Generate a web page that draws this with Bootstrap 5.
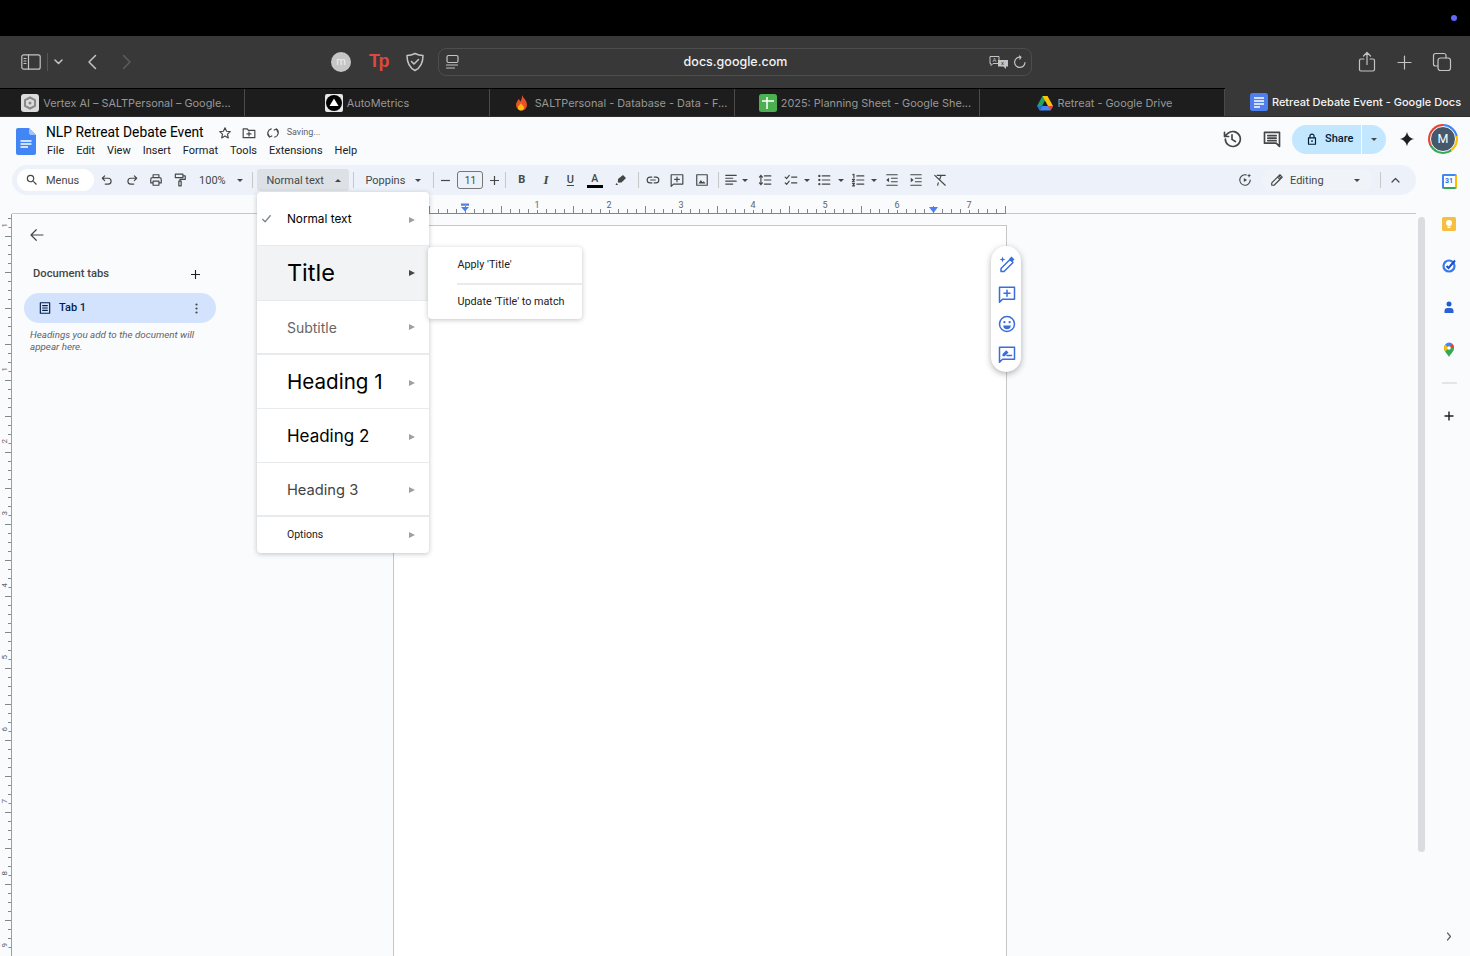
<!DOCTYPE html>
<html lang="en">
<head>
  <meta charset="UTF-8" />
  <meta name="viewport" content="width=device-width, initial-scale=1.0"/>
  <title>Retreat Debate Event - Google Docs</title>
  <link href="https://cdn.jsdelivr.net/npm/bootstrap@5.3.0/dist/css/bootstrap.min.css" rel="stylesheet" />
  <style>
    html, body { height: 100%; overflow: hidden; }
    body { font-family: Roboto, "Liberation Sans", sans-serif; background: #f9fbfd; color: #444746; font-size: 11px; }
    svg { display: block; flex-shrink: 0; }
    .stroke-ico { fill: none; stroke: currentColor; stroke-width: 2; stroke-linecap: round; stroke-linejoin: round; }
    .sw-1 { stroke-width: 1.2; }
    .sw-2 { stroke-width: 1.5; }
    .sw-3 { stroke-width: 1.6; }
    .ico { width: 14px; height: 14px; }
    .ico-md { width: 18px; height: 18px; }
    .ico-lg { width: 20px; height: 20px; }
    .fill-row { min-height: 0; }

    /* mac chrome */
    .top-black { height: 36px; background: #000; padding-right: 13px; }
    .rec-dot { width: 6px; height: 6px; border-radius: 50%; background: #6464ff; }
    .safari-bar { height: 52px; background: #383838; color: #c4c4c4; flex-shrink: 0; }
    .sb-left { width: 438px; padding-left: 21px; }
    .sb-sep { width: 1px; height: 18px; background: #555; margin: 0 6px; }
    .sb-back { margin-left: 24px; }
    .sb-forward { margin-left: 25px; color: #5c5c5c; }
    .sb-avatar { width: 20px; height: 20px; border-radius: 50%; background: #c6c6c6; color: #eee; font-size: 11px; margin-left: 199px; }
    .sb-tp { font-family: "Liberation Sans", sans-serif; font-weight: 700; font-size: 18px; color: #dc4a3f; width: 19px; margin: 0 0 2px 18px; letter-spacing: -1.5px; line-height: 1; }
    .sb-shield { margin-left: 17px; }
    .addr-box { width: 594px; height: 28px; border: 1px solid #4d4d4d; border-radius: 8px; display: grid; grid-template-columns: 1fr auto 1fr; align-items: center; padding: 0 4px 0 5px; }
    .addr-text { font-family: Inter, sans-serif; font-size: 12.5px; color: #f2f2f2; font-weight: 500; padding-top: 1px; }
    .sb-right { gap: 18.5px; padding-right: 18px; }
    .tab-strip { height: 29px; flex-shrink: 0; background: #1d1d1d; border-top: 1px solid #000; border-bottom: 1px solid #2d2d2d; font-family: Inter, sans-serif; font-size: 10.9px; color: #979797; }
    .win-tab { width: 245px; border-right: 1px solid #4a4a4a; gap: 4px; white-space: nowrap; }
    .win-tab span { padding-top: 1px; }
    .win-tab.is-current { background: #383838; color: #f4f4f4; border-right: 0; font-weight: 500; font-size: 11px; margin-top: -1px; }
    .fav { width: 18px; height: 18px; }

    /* docs header */
    .doc-head { height: 48px; padding-left: 16px; flex-shrink: 0; }
    .doc-logo { width: 20px; height: 27px; margin-right: 10px; }
    .doc-name { font-size: 13.8px; color: #000; line-height: 18px; padding-top: 6px; }
    .head-ico { color: #444746; width: 14px; height: 14px; }
    .saving-note { font-size: 9px; color: #5f6368; margin-left: -3px; }
    .name-icons { gap: 10px; margin-left: 14px; }
    .menu-links { gap: 12px; font-size: 11px; color: #202124; line-height: 16px; padding: 2px 0 0 1px; }
    .head-right { padding: 0 12px 4px 0; }
    .history-ico { margin-right: 20px; }
    .share-group { width: 94px; height: 29px; margin-left: 10px; background: #c2e7ff; border-radius: 15px; color: #001d35; }
    .share-main { width: 69px; font-weight: 500; font-size: 11px; gap: 6px; padding-left: 13px; }
    .share-caret { width: 25px; border-left: 1px solid #f9fbfd; height: 29px; }
    .gem { margin-left: 13px; color: #1f1f1f; }
    .avatar-ring { width: 30px; height: 30px; margin-left: 13px; border-radius: 50%; background: conic-gradient(#4285f4 0 22%, #fbbc04 22% 40%, #34a853 40% 68%, #ea4335 68% 100%); }
    .avatar-in { width: 26px; height: 26px; border: 1px solid #fff; border-radius: 50%; background: #46586a; color: #fff; font-size: 12.5px; }

    /* toolbar */
    .editor-col { width: 1416px; flex-shrink: 0; padding-left: 12px; }
    .tool-strip { height: 30px; background: #edf2fa; border-radius: 15px; padding-left: 5px; flex-shrink: 0; }
    .tool-strip .tb-txt { padding-top: 2px; }
    .menus-pill { width: 77px; height: 22px; background: #fff; border-radius: 11px; padding-left: 8px; gap: 7px; margin-right: 1px; }
    .tb-cell { height: 22px; display: flex; align-items: center; justify-content: center; flex-shrink: 0; color: #444746; }
    .cw-10 { width: 10px; } .cw-12 { width: 12px; } .cw-14 { width: 14px; } .cw-16 { width: 16px; } .cw-18 { width: 18px; } .cw-21 { width: 21px; }
    .cw-22 { width: 22px; } .cw-24 { width: 24.4px; } .cw-27 { width: 27px; } .cw-30 { width: 30px; }
    .tb-sep { width: 1px; height: 16px; background: #c7c7c7; margin: 0 3.5px; flex-shrink: 0; }
    .caret-dn { width: 0; height: 0; border-left: 3.5px solid transparent; border-right: 3.5px solid transparent; border-top: 3.5px solid #444746; }
    .caret-up { width: 0; height: 0; border-left: 3.5px solid transparent; border-right: 3.5px solid transparent; border-bottom: 3.5px solid #444746; }
    .zoom-cell { width: 56.4px; padding-left: 6.5px; justify-content: space-between; padding-right: 5.5px; }
    .style-anchor { width: 92px; height: 22px; margin-left: .5px; background: #dde1e6; border-radius: 3px; padding: 0 8px 0 9px; }
    .font-cell { width: 72px; padding: 0 8px; justify-content: space-between; }
    .size-box { width: 26px; height: 18px; margin: 0 4px; border: 1px solid #747775; border-radius: 3px; font-size: 10px; }
    .fmt-b { font-weight: 700; font-size: 11px; }
    .fmt-i { font-family: "Liberation Serif", serif; font-style: italic; font-weight: 700; font-size: 13px; }
    .fmt-u { font-weight: 500; font-size: 11px; text-decoration: underline; text-underline-offset: 1.5px; }
    .fmt-a { font-weight: 500; font-size: 10.5px; line-height: 11px; flex-direction: column; }
    .a-bar { width: 16px; height: 3px; background: #000; margin-top: 1px; }
    .edit-pill { width: 110px; height: 22px; margin-left: 10px; border-radius: 11px; background: #f0f4f9; padding: 0 12px 0 8px; gap: 6px; }
    .right-sep { margin: 0 7px 0 8px; }
    .fold-cell { margin-right: 14px; }

    /* dropdown */
    .style-menu { top: 23px; left: 0; width: 172px; min-width: 172px; padding: 0; border: 0; border-radius: 4px; box-shadow: 0 1px 5px rgba(60,64,67,.3); z-index: 30; }
    .style-item { display: flex; align-items: center; justify-content: space-between; padding: 0 14px 0 30px; border-bottom: 1px solid #e8eaed; font-family: Inter, sans-serif; color: #000; }
    .style-item:hover { background: transparent; }
    .style-item .tri { width: 0; height: 0; border-top: 3.5px solid transparent; border-bottom: 3.5px solid transparent; border-left: 6px solid #9aa0a6; }
    .it-normal { height: 54px; font-size: 11.8px; position: relative; padding-top: 3px; }
    .it-title { height: 55px; font-size: 23.5px; background: #f1f3f4; }
    .it-title:hover { background: #f1f3f4; }
    .it-title .tri { border-left-color: #444746; }
    .it-sub { height: 54px; font-size: 14px; color: #666; border-bottom-width: 2px; }
    .it-h1 { height: 54px; font-size: 20.6px; padding-top: 2px; }
    .it-h2 { height: 54px; font-size: 17px; padding-top: 2px; }
    .it-h3 { height: 54px; font-size: 14.7px; color: #434343; border-bottom-width: 2px; padding-top: 2px; }
    .it-opt { height: 36px; font-family: Roboto, sans-serif; font-size: 10.5px; color: #202124; border-bottom: 0; }
    .check-mark { left: 4px; top: 21px; color: #80868b; }
    .sub-menu { left: 171px; top: 55px; width: 154px; height: 72px; background: #fff; border-radius: 4px; box-shadow: 0 1px 5px rgba(60,64,67,.3); font-size: 10.8px; color: #202124; z-index: 31; padding: 1px 0 0 29.5px; }
    .sub-row { height: 35px; }
    .sub-row + .sub-row { border-top: 2px solid #e8eaed; height: 36px; }

    /* rulers */
    .ruler-row { height: 19px; margin-bottom: -1px; padding-left: 381px; position: relative; z-index: 2; flex-shrink: 0; }
    .h-ruler { width: 613px; height: 19px; position: relative; border-bottom: 1px solid #80868b; padding-left: 108px; font-size: 9px; color: #5f6368;
      background-image: repeating-linear-gradient(90deg, #80868b 0 1px, transparent 1px 36px), repeating-linear-gradient(90deg, #80868b 0 1px, transparent 1px 9px);
      background-size: 100% 7px, 100% 4px; background-position: 0 100%, 0 100%; background-repeat: no-repeat; }
    .h-cell { width: 72px; text-align: center; line-height: 18px; height: 18px; }
    .h-cell span { background: #f9fbfd; padding: 0 2px; display: inline-block; height: 15px; line-height: 20px; }
    .indent-left { left: 68px; top: 8px; width: 8px; }
    .indent-right { left: 536px; top: 12px; }
    .work-row { border-top: 1px solid #c7c7c7; min-height: 0; }
    .v-ruler { width: 12px; margin-left: -12px; flex-shrink: 0; overflow: hidden; font-size: 8px; color: #5f6368; border-right: 1px solid #9aa0a6; position: relative;
      background-image: repeating-linear-gradient(0deg, transparent 0 35px, #80868b 35px 36px), repeating-linear-gradient(0deg, transparent 0 8px, #80868b 8px 9px);
      background-size: 6px 100%, 3px 100%; background-position: 100% 0, 100% 0; background-repeat: no-repeat; }
    .v-num { height: 72px; flex-shrink: 0; display: flex; align-items: center; padding-left: 1px; }
    .v-num span { writing-mode: vertical-rl; transform: rotate(180deg); background: #f9fbfd; line-height: 8px; }
    .v-first { height: 22px; }
    .v-gap { height: 97px; flex-shrink: 0; }

    /* sidebar */
    .outline-col { width: 381px; flex-shrink: 0; padding: 12px 177px 0 12px; }
    .back-ico { margin-left: 4px; color: #444746; }
    .outline-head { font-weight: 500; font-size: 11.2px; margin-top: 22px; padding: 0 16px 0 9px; height: 16px; }
    .outline-tab { height: 30px; margin-top: 11px; background: #d3e3fd; border-radius: 15px; color: #041e49; font-weight: 500; font-size: 11px; padding: 0 18.5px 0 14px; gap: 7px; }
    .outline-note { font-style: italic; font-size: 9.8px; line-height: 11.5px; color: #5f6368; margin: 6px 0 0 6px; width: 175px; }

    /* page */
    .doc-page { width: 614px; margin-top: 11px; background: #fff; border: 1px solid #c7c7c7; border-bottom: 0; position: relative; flex-shrink: 0; }
    .float-pill { top: 20px; right: -15px; width: 30px; height: 126px; background: #fff; border-radius: 15px; box-shadow: 0 2px 6px rgba(60,64,67,.4); color: #3b6ddb; padding: 9px 0 9px 2px; }

    /* right side */
    .side-col { flex-grow: 1; }
    .scroll-thumb { width: 7px; height: 635px; margin: 52px 0 0 2px; background: #dadce0; border-radius: 4px; flex-shrink: 0; }
    .apps-col { flex-grow: 1; margin-left: 3px; padding: 7px 0 15px; gap: 22px; }
    .apps-sep { width: 15px; height: 2px; background: #e3e5e8; }
    .apps-plus { color: #1f1f1f; }
    .apps-more { color: #5f6368; }
    .cal-cell { height: 20px; }
    .cal-wrap { width: 15px; height: 15px; font-size: 7px; font-weight: 700; color: #1a73e8; line-height: 1; background: #fff; border: 2px solid #4285f4; border-right-color: #fbbc04; border-bottom-color: #34a853; border-radius: 2px; margin-bottom: 2px; }
  </style>
</head>
<body class="d-flex flex-column">

<svg width="0" height="0" class="position-absolute">
  <symbol id="i-search" viewBox="0 0 24 24"><path fill="currentColor" d="M15.5 14h-.79l-.28-.27A6.47 6.47 0 0 0 16 9.5 6.5 6.5 0 1 0 9.5 16c1.61 0 3.09-.59 4.23-1.57l.27.28v.79l5 4.99L20.49 19l-4.99-5zm-6 0C7.01 14 5 11.99 5 9.5S7.01 5 9.5 5 14 7.01 14 9.5 11.99 14 9.5 14z"/></symbol>
  <symbol id="i-undo" viewBox="0 0 24 24"><path class="stroke-ico" d="M8 5 4 9l4 4M4 9h10a5 5 0 0 1 0 10H9"/></symbol>
  <symbol id="i-redo" viewBox="0 0 24 24"><path class="stroke-ico" d="m16 5 4 4-4 4M20 9H10a5 5 0 0 0 0 10h5"/></symbol>
  <symbol id="i-print" viewBox="0 0 24 24"><path class="stroke-ico" d="M7 8V3h10v5M7 17H3v-6a3 3 0 0 1 3-3h12a3 3 0 0 1 3 3v6h-4M7 14h10v7H7z"/></symbol>
  <symbol id="i-paint" viewBox="0 0 24 24"><path class="stroke-ico" d="M4 2h13v6H4zM17 5h4v6H12v3M10 14h4v8h-4z"/></symbol>
  <symbol id="i-high" viewBox="0 0 24 24"><path fill="currentColor" d="m16 2 6 6-9 9H9l-1 1-3-3 1-1v-4zM3 18l3 3-1 1H1z"/></symbol>
  <symbol id="i-link" viewBox="0 0 24 24"><path class="stroke-ico" d="M10 7H7a5 5 0 0 0 0 10h3M14 7h3a5 5 0 0 1 0 10h-3M8 12h8"/></symbol>
  <symbol id="i-comment-add" viewBox="0 0 24 24"><path class="stroke-ico" d="M2 3h20v16H6l-4 4zM12 7v8M8 11h8"/></symbol>
  <symbol id="i-image" viewBox="0 0 24 24"><path class="stroke-ico" d="M3 3h18v18H3z"/><path fill="currentColor" d="m6 18 4-6 3 4 2-2 3 4z"/></symbol>
  <symbol id="i-align" viewBox="0 0 24 24"><path class="stroke-ico" d="M3 4h18M3 9h12M3 14h18M3 19h12"/></symbol>
  <symbol id="i-spacing" viewBox="0 0 24 24"><path class="stroke-ico" d="M11 5h11M11 12h11M11 19h11M5 4v16M2.5 7 5 4l2.5 3M2.5 17 5 20l2.5-3"/></symbol>
  <symbol id="i-check" viewBox="0 0 24 24"><path class="stroke-ico" d="m2 7 2.500 2.500L9 4M2 17l2.500 2.500L9 14M13 7h9M13 17h9"/></symbol>
  <symbol id="i-bullet" viewBox="0 0 24 24"><path class="stroke-ico" d="M9 5h13M9 12h13M9 19h13"/><circle cx="4" cy="5" r="2" fill="currentColor"/><circle cx="4" cy="12" r="2" fill="currentColor"/><circle cx="4" cy="19" r="2" fill="currentColor"/></symbol>
  <symbol id="i-number" viewBox="0 0 24 24"><path class="stroke-ico" d="M10 5h12M10 12h12M10 19h12M3 3l2-1v6M2.5 11H6l-3.500 4H6M2.5 18H6l-2 2 2 2H2.500"/></symbol>
  <symbol id="i-indent-out" viewBox="0 0 24 24"><path class="stroke-ico" d="M3 3h18M11 9h10M11 15h10M3 21h18"/><path fill="currentColor" d="M7 8v8l-5-4z"/></symbol>
  <symbol id="i-indent-in" viewBox="0 0 24 24"><path class="stroke-ico" d="M3 3h18M11 9h10M11 15h10M3 21h18"/><path fill="currentColor" d="M3 8v8l5-4z"/></symbol>
  <symbol id="i-clear" viewBox="0 0 24 24"><path class="stroke-ico" d="M7 4h14M14 4l-3 8M9 17l-1 4M3 4l18 17"/></symbol>
  <symbol id="i-pen" viewBox="0 0 24 24"><path class="stroke-ico" d="M3 21v-4L15 5l4 4L7 21zM13 7l4 4M15 5l2-2 4 4-2 2"/></symbol>
  <symbol id="i-history" viewBox="0 0 24 24"><path class="stroke-ico" d="M4 12a9 9 0 1 0 3-6.700L3 9M3 4v5h5M12 7v5.500l4 2.500"/></symbol>
  <symbol id="i-comments" viewBox="0 0 24 24"><path class="stroke-ico" d="M3 4h18v17l-4-4H3zM7 8h10M7 11h10M7 14h10"/></symbol>
  <symbol id="i-lock" viewBox="0 0 24 24"><path class="stroke-ico" d="M6 10h12v11H6zM8.500 10V7a3.500 3.500 0 0 1 7 0v3"/><circle cx="12" cy="15.5" r="1.5" fill="currentColor"/></symbol>
  <symbol id="i-gem" viewBox="0 0 24 24"><path fill="currentColor" d="M12 1c1 6 5 10 11 11-6 1-10 5-11 11-1-6-5-10-11-11 6-1 10-5 11-11z"/></symbol>
  <symbol id="i-present" viewBox="0 0 24 24"><path class="stroke-ico" d="M21 12a9 9 0 1 1-7-8.800"/><path fill="currentColor" d="M10 8.500v7l5.500-3.500zM19 1l1 2.500 2.500 1-2.500 1L19 8l-1-2.500-2.500-1 2.500-1z"/></symbol>
  <symbol id="i-spark-pen" viewBox="0 0 24 24"><path class="stroke-ico" d="M4 22v-4L16 6l4 4L8 22z"/><path fill="currentColor" d="m15 5 3-3 4 4-3 3zM6 2l1 3 3 1-3 1-1 3-1-3-3-1 3-1z"/></symbol>
  <symbol id="i-smile" viewBox="0 0 24 24"><circle class="stroke-ico" cx="12" cy="12" r="10"/><circle cx="8.5" cy="9.5" r="1.5" fill="currentColor"/><circle cx="15.5" cy="9.5" r="1.5" fill="currentColor"/><path fill="currentColor" d="M7 14h10a5 5 0 0 1-10 0z"/></symbol>
  <symbol id="i-suggest" viewBox="0 0 24 24"><path class="stroke-ico" d="M2 3h20v16H6l-4 4zM12 14h6"/><path fill="currentColor" d="m6 15 0-3 5-5 3 3-5 5z"/></symbol>
  <symbol id="i-docline" viewBox="0 0 24 24"><path class="stroke-ico" d="M4 3h16v18H4zM8 8h8M8 12h8M8 16h8"/></symbol>
</svg>

<div class="top-black d-flex justify-content-end align-items-center flex-shrink-0"><div class="rec-dot"></div></div>

<div class="safari-bar d-flex align-items-center">
  <div class="sb-left d-flex align-items-center flex-shrink-0">
    <svg width="20" height="16" viewBox="0 0 20 16" class="stroke-ico sw-1"><rect x=".8" y=".8" width="18.4" height="14.4" rx="2"/><path d="M7.5 1v14M3 4.500h2M3 7h2M3 9.500h2"/></svg>
    <div class="sb-sep"></div>
    <svg width="9" height="6" viewBox="0 0 9 6" class="stroke-ico sw-2"><path d="m1 1 3.500 3.500L8 1"/></svg>
    <svg width="10" height="16" viewBox="0 0 10 16" class="stroke-ico sw-2 sb-back"><path d="M8.500 1.500 2 8l6.500 6.500"/></svg>
    <svg width="10" height="16" viewBox="0 0 10 16" class="stroke-ico sw-2 sb-forward"><path d="M1.500 1.500 8 8l-6.500 6.500"/></svg>
    <div class="sb-avatar d-flex align-items-center justify-content-center">m</div>
    <div class="sb-tp">Tp</div>
    <svg width="20" height="20" viewBox="0 0 20 20" class="stroke-ico sw-2 sb-shield"><path d="M10 1.500c3 1.600 5.500 2 8 2 0 6-1 11.500-8 15-7-3.500-8-9-8-15 2.500 0 5-.4 8-2z"/><path d="m6.500 9.500 2.500 2.500 4.500-4.500"/></svg>
  </div>
  <div class="addr-box flex-shrink-0">
    <svg width="16" height="16" viewBox="0 0 16 16" class="stroke-ico sw-1"><rect x="3" y="1.500" width="11" height="7" rx="1.500"/><path d="M2.500 11h11M2.500 14h8"/></svg>
    <div class="addr-text">docs.google.com</div>
    <div class="d-flex align-items-center justify-content-end gap-1">
      <svg width="20" height="15" viewBox="0 0 20 15"><path d="M1 1.500h9v7H4l-2 2v-2H1z" fill="none" stroke="#c4c4c4"/><path d="M9 5h10v6.500h-2V14l-2.500-2.500H9z" fill="#c4c4c4"/><text x="3.500" y="7" font-size="6" fill="#c4c4c4" font-family="Roboto">A</text><text x="12" y="10" font-size="6" fill="#383838" font-family="Roboto">x</text></svg>
      <svg width="14" height="14" viewBox="0 0 14 14" class="stroke-ico sw-1"><path d="M12 7.500A5.200 5.200 0 1 1 8 2.200L6.500 1M8 2.200 6.800 4"/></svg>
    </div>
  </div>
  <div class="sb-right d-flex align-items-center justify-content-end flex-grow-1">
    <svg width="18" height="22" viewBox="0 0 18 22" class="stroke-ico sw-1"><path d="M6 8H3a1.500 1.500 0 0 0-1.500 1.500v9A1.500 1.500 0 0 0 3 20h12a1.500 1.500 0 0 0 1.500-1.500v-9A1.500 1.500 0 0 0 15 8h-3M9 13.500V1.500M5.500 5 9 1.500 12.500 5"/></svg>
    <svg width="19" height="19" viewBox="0 0 19 19" class="stroke-ico sw-1"><path d="M9.500 3v13M3 9.500h13"/></svg>
    <svg width="20" height="20" viewBox="0 0 20 20" class="stroke-ico sw-1"><rect x="6" y="6" width="12.500" height="12.500" rx="2.500"/><path d="M14 6V3.500A2 2 0 0 0 12 1.500H3.500a2 2 0 0 0-2 2V12a2 2 0 0 0 2 2H6"/></svg>
  </div>
</div>

<div class="tab-strip d-flex">
  <div class="win-tab d-flex align-items-center justify-content-center ps-2">
    <svg class="fav" viewBox="0 0 18 18"><rect width="18" height="18" rx="3" fill="#dcdcdc"/><path d="M9 3.500 14 6.200v5.600L9 14.500 4 11.800V6.200z" fill="none" stroke="#8a8a8a" stroke-width="2"/><circle cx="9" cy="9" r="1.500" fill="#8a8a8a"/></svg>
    <span>Vertex AI – SALTPersonal – Google...</span>
  </div>
  <div class="win-tab d-flex align-items-center justify-content-center">
    <svg class="fav" viewBox="0 0 18 18"><rect width="18" height="18" rx="2" fill="#e8e8e8"/><circle cx="9" cy="9" r="8" fill="#000"/><path d="M9 4.500 13.500 12h-9z" fill="#fff"/></svg>
    <span>AutoMetrics</span>
  </div>
  <div class="win-tab d-flex align-items-center justify-content-center ps-3">
    <svg class="fav" viewBox="0 0 18 18"><path d="M9 1c1 3 5 5 5 10a5.500 5.500 0 0 1-11 0c0-3 2-4 2.500-6 1 .8 1.500 1.500 1.700 2.500C8.500 6 9.200 3.500 9 1z" fill="#e8502a"/><path d="M8 9c.5 2 3 2.500 3 4.500a3 3 0 0 1-6 0c0-2 2.500-2.500 3-4.500z" fill="#fbbc04"/></svg>
    <span>SALTPersonal - Database - Data - F...</span>
  </div>
  <div class="win-tab d-flex align-items-center justify-content-center ps-3">
    <svg class="fav" viewBox="0 0 18 18"><rect width="18" height="18" rx="2.500" fill="#4caf50"/><path d="M3 7h12M8 3v12" stroke="#fff" stroke-width="1.500" fill="none"/></svg>
    <span>2025: Planning Sheet - Google She...</span>
  </div>
  <div class="win-tab d-flex align-items-center justify-content-center ps-1">
    <svg class="fav" viewBox="0 0 18 18"><path d="M6.500 2h5l-5.500 10H1z" fill="#1fa463"/><path d="M6.500 2h5L17 12h-5z" fill="#ffc107"/><path d="M3.500 16.500 6 12h11l-2.500 4.500z" fill="#4285f4"/><path d="M1 12h5l-2.500 4.500z" fill="#2a71d6"/><path d="m12 12 5 0-2.500 4.500z" fill="#ea4335"/></svg>
    <span>Retreat - Google Drive</span>
  </div>
  <div class="win-tab is-current d-flex align-items-center justify-content-center ps-3">
    <svg class="fav" viewBox="0 0 18 18"><rect width="18" height="18" rx="2.500" fill="#4f7fee"/><path d="M4 5h10M4 8h10M4 11h10M4 14h6" stroke="#fff" stroke-width="1.500"/></svg>
    <span>Retreat Debate Event - Google Docs</span>
  </div>
</div>

<header class="doc-head d-flex align-items-center">
  <svg class="doc-logo" viewBox="0 0 20 27"><path d="M2 0h11l7 7v18a2 2 0 0 1-2 2H2a2 2 0 0 1-2-2V2a2 2 0 0 1 2-2z" fill="#4285f4"/><path d="M13 0l7 7h-5a2 2 0 0 1-2-2z" fill="#a1c2fa"/><path d="M4.500 13h11M4.500 16h11M4.500 19h7.500" stroke="#fff" stroke-width="1.500"/></svg>
  <div class="d-flex flex-column h-100">
    <div class="d-flex align-items-center">
      <div class="doc-name">NLP Retreat Debate Event</div>
      <div class="name-icons d-flex align-items-center pt-2">
        <svg class="head-ico stroke-ico" viewBox="0 0 24 24"><path d="m12 3 2.700 6 6.300.7-4.700 4.300 1.300 6.500L12 17l-5.600 3.500L7.700 14 3 9.700 9.300 9z"/></svg>
        <svg class="head-ico stroke-ico" viewBox="0 0 24 24"><path d="M2 5h7l2 2.500h11V20H2zM12 10v7M8.500 13.500h7"/></svg>
        <svg class="head-ico stroke-ico" viewBox="0 0 24 24"><path d="M9 5a8 8 0 0 0-3 14M4 14l2 5 4-2M15 19a8 8 0 0 0 3-14M20 10l-2-5-4 2"/></svg>
        <span class="saving-note">Saving...</span>
      </div>
    </div>
    <nav class="menu-links d-flex">
      <span>File</span><span>Edit</span><span>View</span><span>Insert</span><span>Format</span><span>Tools</span><span>Extensions</span><span>Help</span>
    </nav>
  </div>
  <div class="head-right ms-auto d-flex align-items-center">
    <svg class="ico-lg history-ico" viewBox="0 0 24 24"><use href="#i-history"/></svg>
    <svg class="ico-lg" viewBox="0 0 24 24"><use href="#i-comments"/></svg>
    <div class="share-group d-flex align-items-center">
      <div class="share-main d-flex align-items-center"><svg class="ico" viewBox="0 0 24 24"><use href="#i-lock"/></svg><span>Share</span></div>
      <div class="share-caret d-flex align-items-center justify-content-center"><div class="caret-dn"></div></div>
    </div>
    <svg class="gem" width="16" height="16" viewBox="0 0 24 24"><use href="#i-gem"/></svg>
    <div class="avatar-ring d-flex align-items-center justify-content-center"><div class="avatar-in d-flex align-items-center justify-content-center">M</div></div>
  </div>
</header>

<div class="d-flex flex-grow-1 fill-row">
  <div class="editor-col d-flex flex-column">
    <div class="tool-strip d-flex align-items-center">
      <div class="menus-pill d-flex align-items-center flex-shrink-0"><svg class="ico" viewBox="0 0 24 24"><use href="#i-search"/></svg><span class="tb-txt">Menus</span></div>
      <div class="tb-cell cw-24"><svg class="ico" viewBox="0 0 24 24"><use href="#i-undo"/></svg></div>
      <div class="tb-cell cw-24"><svg class="ico" viewBox="0 0 24 24"><use href="#i-redo"/></svg></div>
      <div class="tb-cell cw-24"><svg class="ico" viewBox="0 0 24 24"><use href="#i-print"/></svg></div>
      <div class="tb-cell cw-24"><svg class="ico" viewBox="0 0 24 24"><use href="#i-paint"/></svg></div>
      <div class="tb-cell zoom-cell"><span class="tb-txt">100%</span><div class="caret-dn"></div></div>
      <div class="tb-sep"></div>
      <div class="position-relative flex-shrink-0">
        <div class="style-anchor d-flex align-items-center justify-content-between"><span class="tb-txt">Normal text</span><div class="caret-up"></div></div>
        <div class="dropdown-menu show style-menu">
          <a class="dropdown-item style-item it-normal">Normal text<span class="tri"></span>
            <svg class="position-absolute check-mark" width="11" height="11" viewBox="0 0 24 24"><path fill="none" stroke="currentColor" stroke-width="3" d="m3 13 6 6L21 5"/></svg>
          </a>
          <a class="dropdown-item style-item it-title">Title<span class="tri"></span></a>
          <a class="dropdown-item style-item it-sub">Subtitle<span class="tri"></span></a>
          <a class="dropdown-item style-item it-h1">Heading 1<span class="tri"></span></a>
          <a class="dropdown-item style-item it-h2">Heading 2<span class="tri"></span></a>
          <a class="dropdown-item style-item it-h3">Heading 3<span class="tri"></span></a>
          <a class="dropdown-item style-item it-opt">Options<span class="tri"></span></a>
          <div class="sub-menu position-absolute">
            <div class="sub-row d-flex align-items-center">Apply 'Title'</div>
            <div class="sub-row d-flex align-items-center">Update 'Title' to match</div>
          </div>
        </div>
      </div>
      <div class="tb-sep"></div>
      <div class="tb-cell font-cell"><span class="tb-txt">Poppins</span><div class="caret-dn"></div></div>
      <div class="tb-sep"></div>
      <div class="tb-cell cw-16"><svg width="9" height="9" viewBox="0 0 9 9"><path d="M0 4.500h9" stroke="currentColor" stroke-width="1.200"/></svg></div>
      <div class="size-box d-flex align-items-center justify-content-center flex-shrink-0">11</div>
      <div class="tb-cell cw-14"><svg width="9" height="9" viewBox="0 0 9 9"><path d="M0 4.500h9M4.500 0v9" stroke="currentColor" stroke-width="1.200"/></svg></div>
      <div class="tb-sep"></div>
      <div class="tb-cell cw-24 fmt-b">B</div>
      <div class="tb-cell cw-24 fmt-i">I</div>
      <div class="tb-cell cw-24 fmt-u">U</div>
      <div class="tb-cell cw-24 fmt-a">A<div class="a-bar"></div></div>
      <div class="tb-cell cw-27"><svg width="12" height="12" viewBox="0 0 24 24"><use href="#i-high"/></svg></div>
      <div class="tb-sep"></div>
      <div class="tb-cell cw-21"><svg class="ico" viewBox="0 0 24 24"><use href="#i-link"/></svg></div>
      <div class="tb-cell cw-27"><svg class="ico" viewBox="0 0 24 24"><use href="#i-comment-add"/></svg></div>
      <div class="tb-cell cw-24"><svg class="ico" viewBox="0 0 24 24"><use href="#i-image"/></svg></div>
      <div class="tb-sep"></div>
      <div class="tb-cell cw-18"><svg class="ico" viewBox="0 0 24 24"><use href="#i-align"/></svg></div>
      <div class="tb-cell cw-10"><div class="caret-dn"></div></div>
      <div class="tb-cell cw-30"><svg class="ico" viewBox="0 0 24 24"><use href="#i-spacing"/></svg></div>
      <div class="tb-cell cw-21"><svg class="ico" viewBox="0 0 24 24"><use href="#i-check"/></svg></div>
      <div class="tb-cell cw-12"><div class="caret-dn"></div></div>
      <div class="tb-cell cw-22"><svg class="ico" viewBox="0 0 24 24"><use href="#i-bullet"/></svg></div>
      <div class="tb-cell cw-12"><div class="caret-dn"></div></div>
      <div class="tb-cell cw-22"><svg class="ico" viewBox="0 0 24 24"><use href="#i-number"/></svg></div>
      <div class="tb-cell cw-10"><div class="caret-dn"></div></div>
      <div class="tb-cell cw-24"><svg class="ico" viewBox="0 0 24 24"><use href="#i-indent-out"/></svg></div>
      <div class="tb-cell cw-24"><svg class="ico" viewBox="0 0 24 24"><use href="#i-indent-in"/></svg></div>
      <div class="tb-cell cw-24"><svg class="ico" viewBox="0 0 24 24"><use href="#i-clear"/></svg></div>
      <div class="ms-auto d-flex align-items-center">
        <div class="tb-cell cw-14"><svg class="ico" viewBox="0 0 24 24"><use href="#i-present"/></svg></div>
        <div class="edit-pill d-flex align-items-center"><svg class="ico" viewBox="0 0 24 24"><use href="#i-pen"/></svg><span class="tb-txt">Editing</span><div class="caret-dn ms-auto"></div></div>
        <div class="tb-sep right-sep"></div>
        <div class="tb-cell cw-14 fold-cell"><svg width="9" height="6" viewBox="0 0 9 6" class="stroke-ico sw-1"><path d="m1 5 3.500-3.500L8 5"/></svg></div>
      </div>
    </div>

    <div class="ruler-row">
      <div class="h-ruler d-flex">
        <div class="h-cell"><span>1</span></div><div class="h-cell"><span>2</span></div><div class="h-cell"><span>3</span></div><div class="h-cell"><span>4</span></div><div class="h-cell"><span>5</span></div><div class="h-cell"><span>6</span></div><div class="h-cell"><span>7</span></div>
        <svg class="position-absolute indent-left" width="9" height="9" viewBox="0 0 9 9"><path d="M0 0h9v2.500H0zM0 4h9L4.500 9z" fill="#4f7fee"/></svg>
        <svg class="position-absolute indent-right" width="9" height="6" viewBox="0 0 9 6"><path d="M0 0h9L4.500 6z" fill="#4f7fee"/></svg>
      </div>
    </div>

    <div class="work-row d-flex flex-grow-1">
      <div class="v-ruler d-flex flex-column">
        <div class="v-num v-first"><span>1</span></div>
        <div class="v-gap"></div>
        <div class="v-num"><span>1</span></div><div class="v-num"><span>2</span></div><div class="v-num"><span>3</span></div><div class="v-num"><span>4</span></div><div class="v-num"><span>5</span></div><div class="v-num"><span>6</span></div><div class="v-num"><span>7</span></div><div class="v-num"><span>8</span></div><div class="v-num"><span>9</span></div>
      </div>
      <aside class="outline-col">
        <svg class="back-ico ico-md stroke-ico sw-3" viewBox="0 0 24 24"><path d="M20 12H4M11 5l-7 7 7 7"/></svg>
        <div class="outline-head d-flex align-items-center justify-content-between"><span>Document tabs</span><svg width="9" height="9" viewBox="0 0 9 9"><path d="M0 4.500h9M4.500 0v9" stroke="#1f1f1f" stroke-width="1.100"/></svg></div>
        <div class="outline-tab d-flex align-items-center">
          <svg class="ico" viewBox="0 0 24 24"><use href="#i-docline"/></svg><span class="flex-grow-1">Tab 1</span>
          <svg width="3" height="11" viewBox="0 0 3 11"><circle cx="1.500" cy="1.500" r="1.100" fill="#444746"/><circle cx="1.500" cy="5.500" r="1.100" fill="#444746"/><circle cx="1.500" cy="9.500" r="1.100" fill="#444746"/></svg>
        </div>
        <div class="outline-note">Headings you add to the document will appear here.</div>
      </aside>
      <main class="doc-page">
        <div class="float-pill position-absolute d-flex flex-column align-items-center justify-content-between">
          <svg class="ico-md" viewBox="0 0 24 24"><use href="#i-spark-pen"/></svg>
          <svg class="ico-md" viewBox="0 0 24 24"><use href="#i-comment-add"/></svg>
          <svg class="ico-md" viewBox="0 0 24 24"><use href="#i-smile"/></svg>
          <svg class="ico-md" viewBox="0 0 24 24"><use href="#i-suggest"/></svg>
        </div>
      </main>
    </div>
  </div>

  <div class="side-col d-flex">
    <div class="scroll-thumb"></div>
    <div class="apps-col d-flex flex-column align-items-center">
      <div class="tb-cell cal-cell"><div class="cal-wrap d-flex align-items-center justify-content-center">31</div></div>
      <svg class="ico-lg" viewBox="0 0 20 20"><rect x="3" y="3" width="14" height="14" rx="1.500" fill="#f6bf3f"/><circle cx="10" cy="9" r="3" fill="#fff"/><rect x="8.500" y="12.500" width="3" height="1.500" fill="#fff"/></svg>
      <svg class="ico-lg" viewBox="0 0 20 20"><circle cx="10" cy="10" r="5.500" fill="none" stroke="#3b78e7" stroke-width="2.200"/><path d="m7.500 10 2 2L16 4.500" fill="none" stroke="#1a53c8" stroke-width="2"/></svg>
      <svg class="ico-lg" viewBox="0 0 20 20"><circle cx="10" cy="6" r="2.500" fill="#1a5fd0"/><path d="M5.500 15v-2a3 3 0 0 1 3-3h3a3 3 0 0 1 3 3v2z" fill="#2a62d6"/></svg>
      <svg class="ico-lg" viewBox="0 0 20 20"><path d="M10 17c-1-3-5-5-5-9a5 5 0 0 1 10 0c0 4-4 6-5 9z" fill="#34a853"/><path d="M5 8a5 5 0 0 1 1.500-3.500L10 8 6.200 11.500C5.500 10.500 5 9.300 5 8z" fill="#fbbc04"/><path d="M6.500 4.500A5 5 0 0 1 13 3.500L10 8z" fill="#4285f4"/><path d="M13 3.500A5 5 0 0 1 15 8l-5 0z" fill="#ea4335"/><circle cx="10" cy="8" r="1.800" fill="#fff"/></svg>
      <div class="apps-sep"></div>
      <svg class="apps-plus ico-lg" viewBox="0 0 20 20"><path d="M10 5.500v9M5.500 10h9" stroke="currentColor" stroke-width="1.400"/></svg>
      <svg class="apps-more mt-auto stroke-ico sw-1" width="6" height="9" viewBox="0 0 6 9"><path d="m1.500 1 3 3.500-3 3.500"/></svg>
    </div>
  </div>
</div>

</body>
</html>
